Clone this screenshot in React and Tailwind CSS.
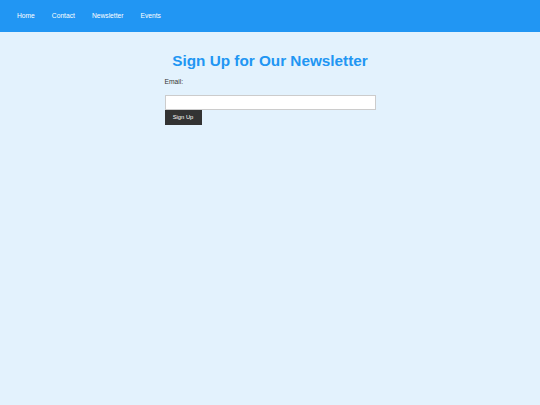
export default function App() {
  const font = { fontFamily: '"Liberation Sans", Arial, sans-serif' };
  return (
    <div className="min-h-[405px] w-full bg-[#E3F2FD]" style={font}>
      <header className="h-[32px] bg-[#2196F3] flex items-center">
        <nav className="flex gap-[17px] pl-[17px] text-[6.7px] text-white leading-none">
          <a>Home</a>
          <a>Contact</a>
          <a>Newsletter</a>
          <a>Events</a>
        </nav>
      </header>
      <main className="w-[211px] mx-auto pt-[21px]">
        <h1 className="text-[15.3px] font-bold text-[#2196F3] text-center leading-none whitespace-nowrap">
          Sign Up for Our Newsletter
        </h1>
        <form className="flex flex-col items-start">
          <label className="text-[6.7px] text-[#333] leading-none mt-[11px]">Email:</label>
          <input type="email" className="mt-[9px] w-[211px] h-[15px] bg-white border border-[#ccc] outline-none" />
          <button type="button" className="w-[37px] h-[15px] bg-[#333] text-white text-[5.8px] leading-none">
            Sign Up
          </button>
        </form>
      </main>
    </div>
  );
}
